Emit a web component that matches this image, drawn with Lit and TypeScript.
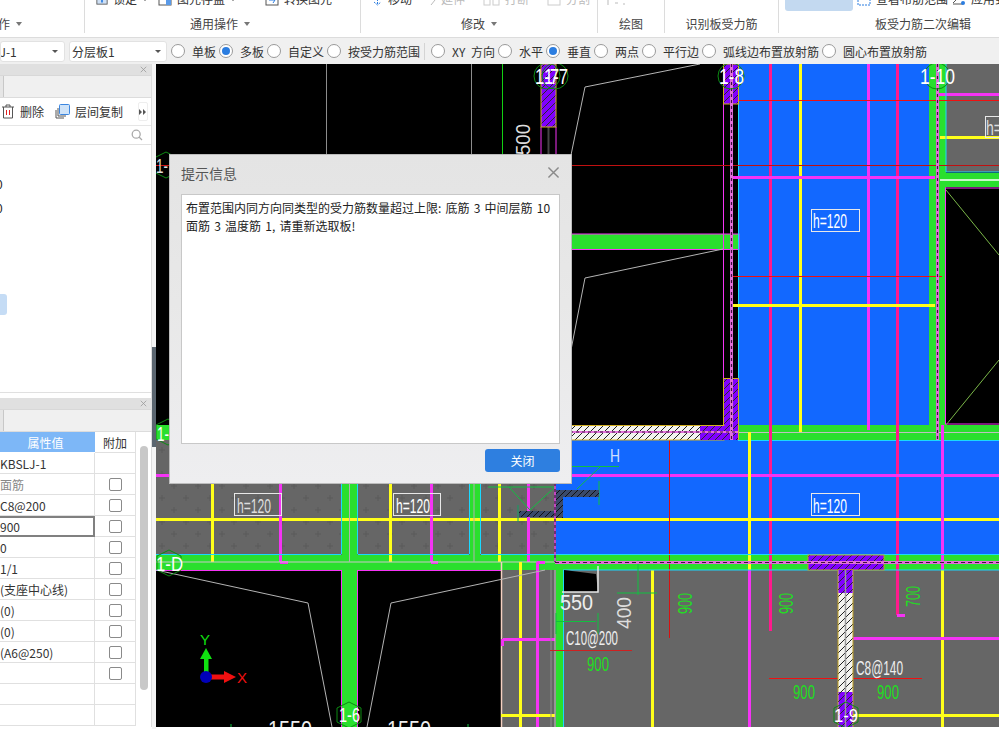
import { LitElement, html, css, svg } from "lit";
import { customElement } from "lit/decorators.js";

const C = { blue: "#1268ff", green: "#2adf2e", mag: "#f533f5", hot: "#ff1a8c", yel: "#ffff1a", cy: "#1ad8ff", grey: "#666666", pur: "#8000ff", red: "#f01010" };
type L = [number, number, number, number, string, number];
const lines: L[] = [
  // thin lines on black upper left
  [326.5, 64, 326.5, 160, "#8c8c8c", 1], [471.5, 64, 471.5, 160, "#8c8c8c", 1], [502.5, 64, 502.5, 160, "#12d012", 1],
  [541, 127, 541, 160, C.mag, 1], [556, 127, 556, 160, C.mag, 1], [548.5, 127, 548.5, 160, "#444", 2],
  // blue room verticals
  [770.5, 64, 770.5, 631, C.hot, 3], [868.5, 64, 868.5, 430, C.mag, 3], [897.5, 64, 897.5, 615, C.hot, 3], [800.5, 64, 800.5, 432, C.yel, 3],
  [897, 615.5, 905, 615.5, C.mag, 3], [738.5, 104, 738.5, 425, C.cy, 1],
  [733, 177.5, 935, 177.5, C.mag, 3], [733, 305.5, 935, 305.5, C.yel, 3],
  // top right grey room
  [938, 94.5, 999, 94.5, C.mag, 3], [940, 137.5, 999, 137.5, C.yel, 3], [946, 64, 946, 172, C.cy, 1], [946, 172, 999, 172, C.cy, 1], [940, 180, 999, 180, "#ffffff", 1.5],
  [946, 190, 999, 255, "#7ab648", 1], [946, 425, 999, 360, "#7ab648", 1],
  // lower band
  [556, 475.5, 999, 475.5, C.mag, 3], [156, 475.5, 170, 475.5, C.mag, 3], [156, 519.5, 999, 519.5, C.yel, 3],
  [749.5, 432, 749.5, 570, C.yel, 3], [942.5, 425, 942.5, 570, C.mag, 3], [942.5, 570, 942.5, 727, C.yel, 3], [749.5, 570, 749.5, 727, C.mag, 3], [652.5, 570, 652.5, 727, C.yel, 3],
  [669.5, 430, 669.5, 638, "#d81010", 1],
  [212.5, 483, 212.5, 562, C.yel, 3], [280.5, 483, 280.5, 562, C.mag, 3], [280, 562.5, 288, 562.5, C.mag, 3], [390.5, 483, 390.5, 562, C.yel, 3], [431.5, 483, 431.5, 562, C.mag, 3], [431, 562.5, 438, 562.5, C.mag, 3],
  [499.5, 483, 499.5, 562, C.yel, 3], [528.5, 483, 528.5, 562, C.mag, 3],
  [156, 554.5, 341, 554.5, C.cy, 1.2], [358, 554.5, 469, 554.5, C.cy, 1.2], [481, 554.5, 999, 554.5, C.cy, 1.2], [341.5, 483, 341.5, 554, C.cy, 1], [357.5, 483, 357.5, 554, C.cy, 1], [469.5, 483, 469.5, 554, C.cy, 1], [480.5, 483, 480.5, 554, C.cy, 1],
  [156, 562, 555, 562, "#c8c8c8", 1], [349.5, 483, 349.5, 562, "#b0b0b0", 1], [474, 483, 474, 562, "#b0b0b0", 1],
  [563, 570, 999, 570, C.cy, 1], [563.5, 570, 563.5, 727, C.cy, 1],
  // lower left
  [156, 570.5, 341, 570.5, C.mag, 1], [358, 570.5, 501, 570.5, C.mag, 1], [341.5, 570, 341.5, 727, C.mag, 1], [357.5, 570, 357.5, 727, C.mag, 1],
  [501.5, 562, 501.5, 727, "#f5d0c0", 1.5], [520.5, 562, 520.5, 727, C.yel, 3], [537.5, 562, 537.5, 727, C.mag, 3], [537, 562.5, 545, 562.5, C.mag, 3], [503, 639.5, 555, 639.5, C.mag, 3], [502.5, 639, 502.5, 646, C.mag, 3], [501, 715.5, 555, 715.5, C.yel, 3],
  [555, 570, 555, 727, "#c8c8c8", 1], [551, 570, 551, 727, "#909090", 1],
  [848, 638.5, 999, 638.5, C.mag, 3], [853, 715.5, 999, 715.5, C.yel, 3],
  // reds
  [731, 100.5, 999, 100.5, C.red, 1], [156, 165.5, 169, 165.5, "#d01010", 1], [570, 165.5, 999, 165.5, "#c01010", 1], [731, 276.5, 942, 276.5, C.red, 1], [550, 650.5, 632, 650.5, "#d02020", 1], [769, 678.5, 922, 678.5, C.red, 1],
  // dims
  [555, 466.5, 619, 466.5, "#10c040", 1], [600, 467, 577, 489, "#10c040", 1], [599, 481, 599, 505, "#10c040", 1],
  [488, 487, 555, 487, "#10c040", 1], [509, 487, 530, 510, "#10c040", 1], [555, 487, 530, 510, "#10c040", 1], [518, 505, 518, 522, "#10a060", 1],
  [638, 560, 638, 595, "#10c040", 1], [617, 593, 657, 593, "#10c040", 1], [617, 562, 657, 562, "#10c040", 1],
  [556, 621.5, 596, 621.5, "#10c040", 1], [598, 613, 598, 634, "#10c040", 1], [556, 613, 556, 634, "#10c040", 1],
  [231, 724, 231, 727, "#10c040", 1], [468, 724, 468, 727, "#10c040", 1],
];
const polys = ["585,87 700,64", "585,87 571,155", "723,249 585,278 571,350", "156,570 308,603 332,727", "545,570 391,603 367,727"];
type T = [string, number, number, number, number, string];
const texts: T[] = [
  ["1-7", 535, 84, 24, 22, "#fff"], ["1-7", 544, 84, 24, 22, "#fff"], ["1-8", 719, 84, 25, 22, "#fff"], ["1-10", 920, 84, 35, 22, "#fff"], ["1-", 156, 173, 12, 20, "#ddd"],
  ["1-", 157, 441, 12, 20, "#fff"], ["1-D", 156, 571, 27, 20, "#fff"], ["1-6", 339, 722, 21, 20, "#fff"], ["1-9", 834, 722, 24, 18, "#fff"],
  ["h=120", 237, 513, 34, 20, "#ddd"], ["h=120", 396, 513, 34, 20, "#fff"], ["h=120", 813, 513, 34, 20, "#fff"], ["h=120", 813, 228, 34, 20, "#fff"], ["h=", 986, 135, 16, 20, "#ddd"],
  ["1550", 268, 738, 44, 23, "#eee"], ["1550", 387, 738, 44, 23, "#eee"], ["550", 560, 610, 33, 22, "#eee"], ["C10@200", 566, 645, 52, 21, "#eee"], ["C8@140", 856, 675, 47, 21, "#eee"],
  ["900", 587, 671, 22, 21, "#22dd22"], ["900", 793, 699, 22, 21, "#22dd22"], ["900", 877, 699, 22, 21, "#22dd22"], ["H", 610, 462, 10, 18, "#cfe0ff"],
];
const vtexts: T[] = [
  ["500", 530, 155, 31, 21, "#ddd"], ["400", 631, 629, 32, 21, "#ddd"], ["900", 692, 614, 21, 21, "#22dd22"], ["900", 793, 614, 21, 21, "#22dd22"], ["700", 920, 607, 21, 21, "#22dd22"],
];
const labelBoxes = [[234, 493, 47, 22], [393, 493, 47, 22], [811, 493, 48, 22], [811, 209, 48, 22], [985, 116, 20, 21]];
const hexes = [[166, 165], [168, 432], [169, 563], [349, 715], [846, 715]];
const rings = [[731, 76], [937, 76], [547, 76], [555, 76]];

const radios: [string, boolean, boolean?][] = [["单板", false], ["多板", true], ["自定义", false], ["按受力筋范围", false, true], ["XY 方向", false], ["水平", false], ["垂直", true], ["两点", false], ["平行边", false], ["弧线边布置放射筋", false], ["圆心布置放射筋", false]];
const rows: [string, boolean][] = [["KBSLJ-1", false], ["面筋", true], ["C8@200", true], ["900", true], ["0", true], ["1/1", true], ["(支座中心线)", true], ["(0)", true], ["(0)", true], ["(A6@250)", true], ["", true], ["", false], ["", false]];

@customElement("app-root")
export class AppRoot extends LitElement {
  static styles = css`
    :host { display: block; width: 999px; height: 729px; position: relative; overflow: hidden; background: #fff; font-family: "Noto Sans CJK SC", "Liberation Sans", sans-serif; font-size: 12px; color: #333; }
    .ribbon { display: flex; height: 37px; border-bottom: 1px solid #dcdcdc; box-sizing: content-box; background: #fff; overflow: hidden; }
    .group { height: 33px; flex: none; border-right: 1px solid #dcdcdc; box-sizing: border-box; display: flex; flex-direction: column; }
    .g1 { width: 85px; } .g2 { width: 276px; } .g3 { width: 237px; } .g4 { width: 67px; } .g5 { width: 114px; } .g6 { width: 220px; border-right: none; }
    .top { height: 11px; display: flex; align-items: flex-end; overflow: hidden; }
    .g2 .top { padding-left: 11px; gap: 10px; }
    .g2 .item:last-child { margin-left: 19px; }
    .g3 .top { padding-left: 11px; gap: 18px; color: #bbb; }
    .g3 .item:first-child { color: #333; }
    .g4 .top { padding-left: 7px; }
    .g6 .top { padding-left: 6px; gap: 4px; align-items: flex-start; white-space: nowrap; }
    .item { display: flex; align-items: center; gap: 5px; height: 14px; line-height: 14px; margin-bottom: 5px; flex: none; white-space: nowrap; }
    .item svg { flex: none; }
    .hl { width: 68px; height: 11px; background: #c3d9f0; border-radius: 0 0 3px 3px; flex: none; }
    .g6 .item { margin-top: -8px; margin-bottom: 0; }
    .glabel { margin-top: 6px; line-height: 14px; text-align: center; display: flex; justify-content: center; align-items: center; gap: 6px; white-space: nowrap; color: #444; }
    .g1 .glabel { justify-content: flex-start; margin-left: -2px; }
    .g2 .glabel { padding-right: 5px; }
    .g6 .glabel { padding-left: 68px; }
    .caret { width: 0; height: 0; border-left: 3.5px solid transparent; border-right: 3.5px solid transparent; border-top: 4px solid #777; flex: none; }
    .bar { height: 26px; background: #f0f0f0; display: flex; align-items: center; white-space: nowrap; overflow: hidden; }
    .sel { height: 21px; box-sizing: border-box; background: #fff; border: 1px solid #e2e2e2; border-radius: 3px; display: flex; align-items: center; justify-content: space-between; padding: 0 5px 0 2px; flex: none; }
    .s1 { width: 65px; margin-right: 4px; padding-left: 0; padding-right: 6px; overflow: hidden; } .s2 { width: 98px; margin-right: 4px; }
    .s1 span { margin-left: -8px; }
    .caret.small { border-left-width: 3px; border-right-width: 3px; border-top-width: 3px; border-top-color: #555; }
    .radio { display: flex; align-items: center; gap: 7px; margin-right: 3px; flex: none; word-spacing: 3px; }
    .dot { width: 14px; height: 14px; border-radius: 50%; border: 1px solid #9a9a9a; background: #fff; box-sizing: border-box; display: flex; align-items: center; justify-content: center; }
    .dot.on::after { content: ""; width: 8px; height: 8px; border-radius: 50%; background: #2b7de0; }
    .vsep { width: 1px; height: 17px; background: #d4d4d4; margin: 0 6px 0 1px; flex: none; }
    .main { display: flex; height: 665px; }
    .left { width: 152px; flex: none; display: flex; flex-direction: column; border-right: 1px solid #dcdcdc; box-sizing: border-box; height: 663px; overflow: hidden; }
    .split { width: 4px; flex: none; background: #f4f4f4; display: flex; align-items: center; }
    .split i { display: block; width: 4px; height: 100px; background: #5b6670; }
    .phead { height: 11px; background: #e0e0e0; display: flex; justify-content: flex-end; align-items: center; padding-right: 4px; flex: none; }
    .ptabs { height: 23px; background: #f0f0f0; border-top: 1px solid #d8d8d8; border-bottom: 1px solid #dcdcdc; box-sizing: border-box; flex: none; }
    .ptabs i { display: block; width: 3px; height: 100%; background: #e6e6e6; border-right: 1px solid #c8c8c8; }
    .ptools { height: 28px; display: flex; align-items: center; border-bottom: 1px solid #e6e6e6; box-sizing: border-box; padding-left: 1px; flex: none; }
    .tool { display: flex; align-items: center; gap: 5px; flex: none; }
    .tool + .tool { margin-left: 11px; }
    .more { margin-left: 15px; width: 10px; height: 19px; border: 1px solid #eee; border-radius: 2px; box-sizing: border-box; display: flex; align-items: center; justify-content: center; flex: none; }
    .psearch { height: 19px; display: flex; justify-content: flex-end; align-items: center; padding-right: 8px; border-bottom: 1px solid #e0e0e0; box-sizing: border-box; flex: none; }
    .tree { height: 248px; border-bottom: 1px solid #e0e0e0; box-sizing: border-box; flex: none; padding-top: 30px; overflow: hidden; color: #222; }
    .tree div { height: 24px; line-height: 18px; margin-left: -4px; }
    .tree .sel-row { width: 7px; height: 21px; margin: 71px 0 0; background: #c5dcf5; border-radius: 0 3px 3px 0; }
    .gap { height: 5px; background: #fff; flex: none; }
    .table { flex: none; display: grid; grid-template-columns: 95px 41px 15px; grid-auto-rows: 21px; position: relative; }
    .th { background: #7db7f7; color: #fff; text-align: center; line-height: 21px; height: 20px; padding-right: 4px; }
    .th2 { color: #333; background: #fff; border-bottom: 1px solid #e0e0e0; height: 21px; box-sizing: border-box; border-right: 1px solid #e0e0e0; padding-right: 0; }
    .c { border-bottom: 1px solid #e0e0e0; border-right: 1px solid #e0e0e0; box-sizing: border-box; line-height: 21px; white-space: nowrap; overflow: hidden; color: #333; }
    .c.muted { color: #888; }
    .c.focus { border: 2px solid #808080; border-left: none; line-height: 18px; }
    .ck { border-bottom: 1px solid #e0e0e0; border-right: 1px solid #e0e0e0; box-sizing: border-box; display: flex; align-items: center; justify-content: center; }
    .ck i { display: block; width: 13px; height: 13px; border: 1px solid #8a8a8a; border-radius: 2px; box-sizing: border-box; background: #fff; }
    .sb { grid-column: 3; grid-row: 1 / span 14; padding-top: 14px; padding-left: 4px; }
    .sb i { display: block; width: 8px; height: 244px; background: #c8c8c8; border-radius: 4px; }
    .cad { flex: 1; height: 663px; display: block; }
    .cad svg { display: block; }
    .cad text { font-family: "Liberation Sans", sans-serif; }
    .dialog { position: absolute; left: 169px; top: 154px; width: 403px; height: 330px; box-sizing: border-box; border: 1px solid #bcbcbc; background: linear-gradient(180deg, #e4e4e4 0%, #e8e8e8 45%, #eeeef0 100%); display: flex; flex-direction: column; padding: 0 11px 11px; }
    .dhead { height: 39px; flex: none; display: flex; align-items: center; justify-content: space-between; font-size: 14px; color: #555; padding-bottom: 4px; box-sizing: border-box; }
    .dbody { height: 250px; flex: none; box-sizing: border-box; background: #fff; border: 1px solid #c8c8c8; padding: 4px; line-height: 18px; color: #222; font-size: 12px; word-spacing: 1.5px; white-space: nowrap; }
    .dfoot { display: flex; justify-content: flex-end; margin-top: 5px; }
    .btn { width: 75px; height: 23px; background: #2e7fe0; color: #fff; border-radius: 3px; text-align: center; line-height: 23px; }
  `;

  cad() {
    return html`<svg width="843" height="663" viewBox="156 64 843 663" xmlns="http://www.w3.org/2000/svg">
      <defs>
        <pattern id="ph" width="7" height="7" patternUnits="userSpaceOnUse"><rect width="7" height="7" fill="#8000ff"/><path d="M0 7 L7 0 M-2 2 L2 -2 M5 9 L9 5" stroke="#2a2a2a" stroke-width="1"/></pattern>
        <pattern id="wh" width="7" height="7" patternUnits="userSpaceOnUse"><rect width="7" height="7" fill="#f4f4f0"/><path d="M0 7 L7 0 M-2 2 L2 -2 M5 9 L9 5" stroke="#222" stroke-width="1"/></pattern>
        <pattern id="dk" width="6" height="6" patternUnits="userSpaceOnUse"><rect width="6" height="6" fill="#3a4a6a"/><path d="M0 6 L6 0 M-2 2 L2 -2 M4 8 L8 4" stroke="#111" stroke-width="1"/></pattern>
        <pattern id="pl" width="24" height="24" patternUnits="userSpaceOnUse"><rect width="24" height="24" fill="#666"/><path d="M6 3 V9 M3 6 H9 M18 15 V21 M15 18 H21" stroke="#5a5a5a" stroke-width="1"/></pattern>
      </defs>
      <rect x="156" y="64" width="843" height="663" fill="#000"/>
      <rect x="156" y="440" width="400" height="115" fill="url(#pl)"/>
      <rect x="501" y="570" width="498" height="157" fill="${C.grey}"/>
      <rect x="945" y="64" width="54" height="108" fill="${C.grey}"/>
      <rect x="739" y="64" width="190" height="362" fill="${C.blue}"/>
      <rect x="556" y="440" width="443" height="115" fill="${C.blue}"/>
      <rect x="929" y="64" width="17" height="376" fill="${C.green}"/>
      <rect x="938" y="173" width="61" height="14" fill="${C.green}"/>
      <rect x="156" y="425" width="843" height="15" fill="${C.green}"/>
      <rect x="156" y="555" width="843" height="15" fill="${C.green}"/>
      <rect x="342" y="483" width="15.5" height="244" fill="${C.green}"/>
      <rect x="470" y="483" width="10" height="72" fill="${C.green}"/>
      <rect x="556" y="570" width="7" height="157" fill="${C.green}"/>
      <rect x="570" y="234" width="169" height="15.5" fill="${C.green}" stroke="${C.mag}" stroke-width="1"/>
      <rect x="945.5" y="188" width="54" height="236" fill="#000" stroke="${C.mag}" stroke-width="1"/>
      <rect x="723" y="104" width="1" height="274" fill="${C.mag}"/>
      <path d="M738 440.5 H999" stroke="${C.cy}" stroke-width="1"/>
      <path d="M739 432.5 H999" stroke="#c0c0c0" stroke-width="1"/>

      ${lines.map((l) => svg`<line x1="${l[0]}" y1="${l[1]}" x2="${l[2]}" y2="${l[3]}" stroke="${l[4]}" stroke-width="${l[5]}"/>`)}
      ${polys.map((p) => svg`<polyline points="${p}" fill="none" stroke="#b4b4b4" stroke-width="1"/>`)}

      <!-- columns -->
      <rect x="541" y="64" width="15" height="63" fill="url(#ph)" stroke="#d4b020" stroke-width="1"/>
      <rect x="723.5" y="64" width="15" height="40" fill="url(#ph)" stroke="#d4b020" stroke-width="1"/>
      <rect x="723.5" y="378.5" width="15" height="61" fill="url(#ph)" stroke="#d4b020" stroke-width="1"/>
      <rect x="570" y="425.5" width="154" height="14.5" fill="url(#wh)" stroke="#d4b020" stroke-width="1"/>
      <rect x="700" y="426" width="38" height="14" fill="url(#ph)"/>
      <rect x="808" y="555" width="76" height="15" fill="url(#ph)" stroke="#c0a020" stroke-width="1"/>
      <rect x="838" y="570" width="15" height="157" fill="url(#wh)" stroke="#c0a020" stroke-width="1"/>
      <rect x="838.5" y="570" width="14" height="23" fill="url(#ph)"/>
      <rect x="838.5" y="692" width="14" height="35" fill="url(#ph)"/>
      <rect x="556" y="490" width="43" height="7" fill="url(#dk)"/>
      <rect x="556" y="490" width="7" height="28" fill="url(#dk)"/>
      <rect x="519" y="511" width="37" height="6" fill="url(#dk)"/>

      <!-- dashed wall lines -->
      <line x1="731.5" y1="64" x2="731.5" y2="440" stroke="#e070d8" stroke-width="3"/>
      <line x1="731.5" y1="64" x2="731.5" y2="440" stroke="#401040" stroke-width="1.2" stroke-dasharray="3 3"/>
      <line x1="937.5" y1="64" x2="937.5" y2="440" stroke="#e070d8" stroke-width="3"/>
      <line x1="937.5" y1="64" x2="937.5" y2="440" stroke="#401040" stroke-width="1.2" stroke-dasharray="3 3"/>
      <line x1="555" y1="562.5" x2="999" y2="562.5" stroke="#e070d8" stroke-width="3"/>
      <line x1="555" y1="562.5" x2="999" y2="562.5" stroke="#401040" stroke-width="1.2" stroke-dasharray="4 3"/>
      <line x1="555" y1="483" x2="555" y2="562" stroke="#e040e0" stroke-width="1.5"/>
      <line x1="555" y1="483" x2="555" y2="562" stroke="#201020" stroke-width="1" stroke-dasharray="3 3"/>
      <line x1="570" y1="432" x2="738" y2="432" stroke="#e070d8" stroke-width="2"/>
      <line x1="570" y1="432" x2="738" y2="432" stroke="#401040" stroke-width="1" stroke-dasharray="3 3"/>
      <line x1="845.5" y1="570" x2="845.5" y2="727" stroke="#999" stroke-width="1.5"/>

      <polygon points="564,570 596,574 598,592 564,592" fill="#000"/>
      <path d="M598 566 V592 H562" fill="none" stroke="#e8e8e8" stroke-width="1.5"/>

      ${labelBoxes.map((b) => svg`<rect x="${b[0] + 0.5}" y="${b[1] + 0.5}" width="${b[2]}" height="${b[3]}" fill="none" stroke="#e8e8e8" stroke-width="1"/>`)}
      ${hexes.map((h) => svg`<polygon points="${h[0] - 12},${h[1] - 7} ${h[0]},${h[1] - 13} ${h[0] + 12},${h[1] - 7} ${h[0] + 12},${h[1] + 7} ${h[0]},${h[1] + 13} ${h[0] - 12},${h[1] + 7}" fill="none" stroke="#0c8a12" stroke-width="1"/>`)}
      ${rings.map((r) => svg`<circle cx="${r[0]}" cy="${r[1]}" r="13" fill="none" stroke="#0c8a12" stroke-width="1"/>`)}
      ${texts.map((t) => svg`<text x="${t[1]}" y="${t[2]}" font-size="${t[4]}" fill="${t[5]}" textLength="${t[3]}" lengthAdjust="spacingAndGlyphs">${t[0]}</text>`)}
      ${vtexts.map((t) => svg`<text transform="translate(${t[1]} ${t[2]}) rotate(-90)" font-size="${t[4]}" fill="${t[5]}" textLength="${t[3]}" lengthAdjust="spacingAndGlyphs">${t[0]}</text>`)}

      <!-- UCS axis -->
      <rect x="204" y="658" width="4.5" height="15" fill="#10e010"/>
      <polygon points="206,648 200,659 212,659" fill="#10e010"/>
      <rect x="211" y="674.5" width="15" height="5" fill="#f01010"/>
      <polygon points="224,671 236,677 224,683" fill="#f01010"/>
      <circle cx="206" cy="677" r="6" fill="#0000b8"/>
      <text x="200" y="645" font-size="15" fill="#10e010">Y</text>
      <text x="237" y="683" font-size="15" fill="#f01010">X</text>
    </svg>`;
  }

  x(size = 9, c = "#999") {
    return html`<svg width="${size}" height="${size}" viewBox="0 0 9 9"><path d="M1 1 L8 8 M8 1 L1 8" stroke="${c}" stroke-width="1" fill="none"/></svg>`;
  }

  render() {
    return html`
      <div class="ribbon">
        <div class="group g1"><div class="top"></div><div class="glabel">作<span class="caret"></span></div></div>
        <div class="group g2">
          <div class="top">
            <div class="item"><svg width="12" height="14" viewBox="0 0 14 14"><rect x="1" y="1" width="12" height="12" fill="#cfe0f5" stroke="#555"/><path d="M7 11 V6" stroke="#2b7de0" stroke-width="2"/></svg>锁定<span class="caret small"></span></div>
            <div class="item"><svg width="14" height="14" viewBox="0 0 14 14"><rect x="1" y="1" width="12" height="12" fill="#fff" stroke="#555"/><rect x="8" y="7" width="5" height="6" fill="#5a9ae8"/></svg>图元存盘<span class="caret small"></span></div>
            <div class="item"><svg width="14" height="14" viewBox="0 0 14 14"><rect x="1" y="1" width="12" height="12" fill="#fff" stroke="#555"/><path d="M4 8 H10 L8 11" stroke="#2b7de0" fill="none"/></svg>转换图元</div>
          </div>
          <div class="glabel">通用操作<span class="caret"></span></div>
        </div>
        <div class="group g3">
          <div class="top">
            <div class="item"><svg width="11" height="14" viewBox="0 0 11 14"><path d="M5.5 1 V13 M2 10 L5.5 13 L9 10" stroke="#2b7de0" stroke-dasharray="2 1" fill="none"/></svg>移动</div>
            <div class="item"><svg width="6" height="14" viewBox="0 0 6 14"><path d="M1 13 L5 8" stroke="#bbb" fill="none"/></svg>延伸</div>
            <div class="item"><svg width="17" height="14" viewBox="0 0 17 14"><rect x="1" y="7" width="6" height="6" fill="none" stroke="#ccc"/><rect x="10" y="7" width="6" height="6" fill="none" stroke="#ccc"/></svg>打断</div>
            <div class="item"><svg width="14" height="14" viewBox="0 0 14 14"><rect x="1" y="1" width="12" height="12" fill="none" stroke="#ccc"/></svg>分割</div>
          </div>
          <div class="glabel">修改<span class="caret"></span></div>
        </div>
        <div class="group g4">
          <div class="top"><div class="item"><svg width="22" height="14" viewBox="0 0 22 14"><path d="M3 8 V13 M10 11 H13 M18 12 H20" stroke="#bbb" fill="none"/></svg></div></div>
          <div class="glabel">绘图</div>
        </div>
        <div class="group g5"><div class="top"></div><div class="glabel">识别板受力筋</div></div>
        <div class="group g6">
          <div class="top">
            <div class="hl"></div>
            <div class="item"><svg width="14" height="14" viewBox="0 0 14 14"><rect x="1" y="1" width="12" height="12" fill="none" stroke="#2b7de0" stroke-dasharray="2 1"/></svg>查看布筋范围</div>
            <div class="item"><svg width="14" height="14" viewBox="0 0 14 14"><path d="M1 11 L8 4 M1 12 H11" stroke="#555" fill="none"/><circle cx="11" cy="11" r="2" fill="#2b7de0"/></svg>应用到其他板</div>
          </div>
          <div class="glabel">板受力筋二次编辑</div>
        </div>
      </div>
      <div class="bar">
        <div class="sel s1"><span>LJ-1</span><i class="caret small"></i></div>
        <div class="sel s2"><span>分层板1</span><i class="caret small"></i></div>
        ${radios.map((r) => html`<div class="radio"><span class="dot ${r[1] ? "on" : ""}"></span><span>${r[0]}</span></div>${r[2] ? html`<div class="vsep"></div>` : ""}`)}
      </div>
      <div class="main">
        <div class="left">
          <div class="phead">${this.x(7)}</div>
          <div class="ptabs"><i></i></div>
          <div class="ptools">
            <div class="tool"><svg width="14" height="15" viewBox="0 0 14 15"><path d="M1 3 H13 M5 3 V1 H9 V3 M2.5 3 V14 H11.5 V3" fill="none" stroke="#555"/><path d="M5.5 6 V11 M8.5 6 V11" stroke="#e02020"/></svg>删除</div>
            <div class="tool"><svg width="15" height="15" viewBox="0 0 15 15"><path d="M1 6 V14 H9 M3 4 V12 H11" fill="none" stroke="#555"/><rect x="4.5" y="0.5" width="10" height="10" rx="1" fill="#cfe3f8" stroke="#3b86e0"/></svg>层间复制</div>
            <div class="more"><svg width="8" height="6" viewBox="0 0 8 6"><path d="M0 0 L3 3 L0 6 Z M4 0 L7 3 L4 6 Z" fill="#555"/></svg></div>
          </div>
          <div class="psearch"><svg width="12" height="12" viewBox="0 0 12 12"><circle cx="5.2" cy="5.2" r="4" fill="none" stroke="#aaa" stroke-width="1.3"/><path d="M8 8 L11 11" stroke="#aaa" stroke-width="1.3"/></svg></div>
          <div class="tree"><div>0</div><div>0</div><div class="sel-row"></div></div>
          <div class="gap"></div>
          <div class="phead">${this.x(7)}</div>
          <div class="ptabs"><i></i></div>
          <div class="table">
            <div class="th">属性值</div><div class="th2 th">附加</div>
            <div class="sb"><i></i></div>
            ${rows.map((r, i) => html`<div class="c ${i === 1 ? "muted" : ""} ${i === 3 ? "focus" : ""}">${r[0]}</div><div class="ck">${r[1] ? html`<i></i>` : ""}</div>`)}
          </div>
        </div>
        <div class="split"><i></i></div>
        <div class="cad">${this.cad()}</div>
      </div>
      <div class="dialog">
        <div class="dhead"><span>提示信息</span>${this.x(13, "#8a8a8a")}</div>
        <div class="dbody">布置范围内同方向同类型的受力筋数量超过上限: 底筋 3 中间层筋 10<br />面筋 3 温度筋 1, 请重新选取板!</div>
        <div class="dfoot"><div class="btn">关闭</div></div>
      </div>
    `;
  }
}
